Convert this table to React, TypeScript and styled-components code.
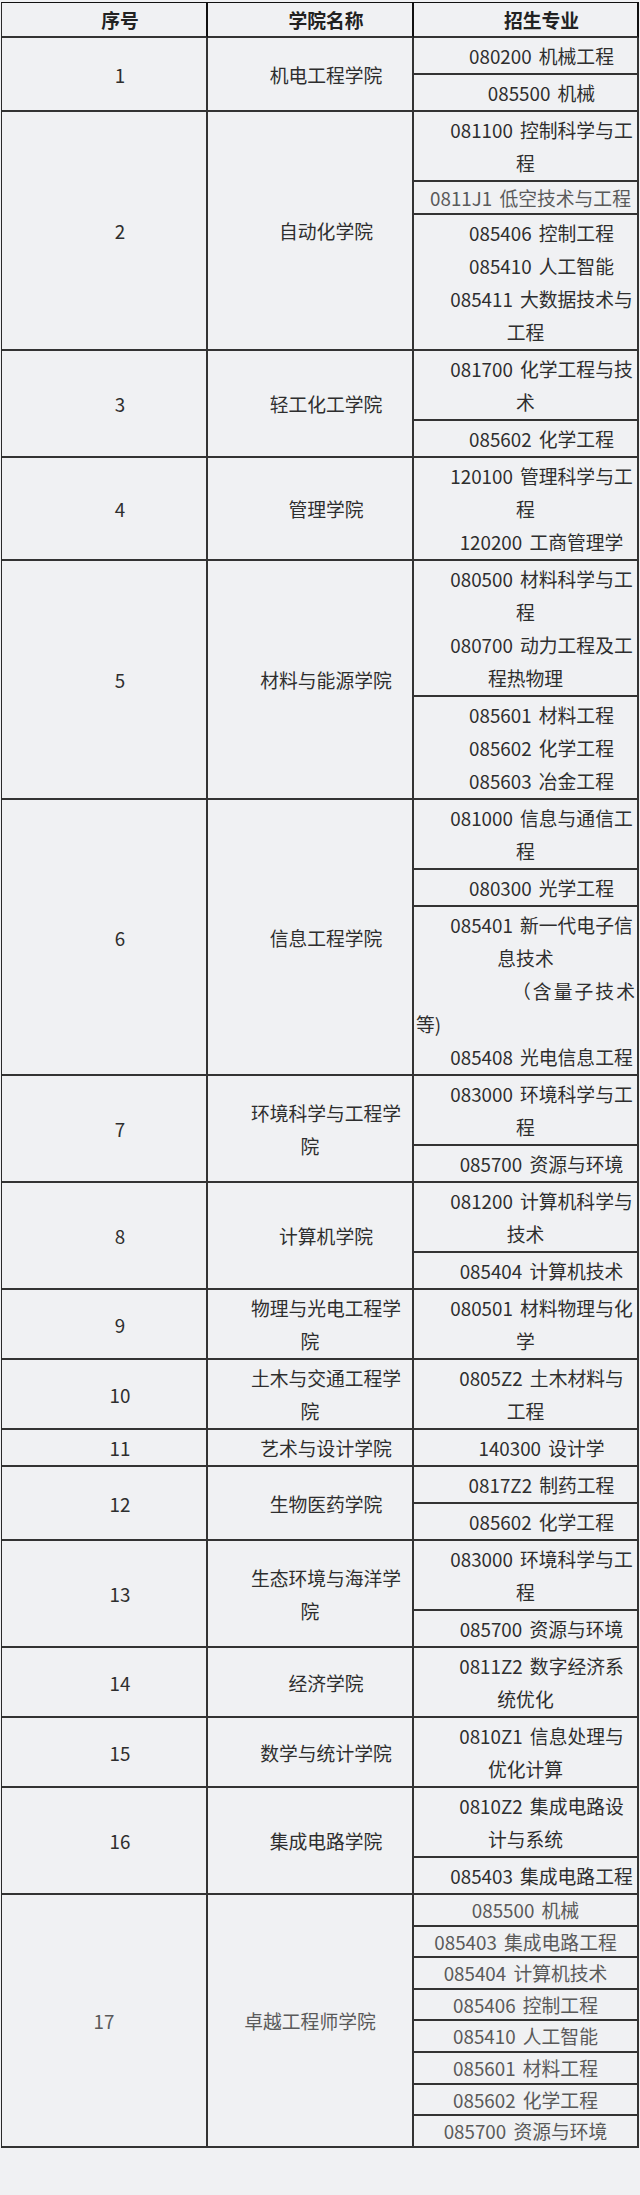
import React from 'react';
import styled, { createGlobalStyle } from 'styled-components';

const GlobalStyle = createGlobalStyle`
  html, body {
    margin: 0;
    padding: 0;
    background: #f0f1f3;
  }
  body {
    font-family: "Noto Sans CJK SC", "Noto Sans", sans-serif;
  }
`;

const Page = styled.div`
  padding: 2px 0 45px 1px;
`;

const Table = styled.table`
  width: 638px;
  table-layout: fixed;
  border-collapse: separate;
  border-spacing: 0;
  border-left: 1px solid #2a2a2a;
  border-top: 1px solid #111;
  font-size: 18.8px;
  word-spacing: 3px;
  color: #2e2e2e;
`;

const HeadCell = styled.th<{ $w: number }>`
  width: ${(p) => p.$w}px;
  box-sizing: border-box;
  padding: 0 2px;
  border-right: 2px solid #111;
  border-bottom: 2px solid #333;
  line-height: 33px;
  font-weight: 700;
  color: #222;
  text-align: center;
  text-indent: 32px;
`;

const Cell = styled.td<{ $added?: boolean; $lh?: number; $indent?: number }>`
  padding: 1px 2px;
  border-right: 2px solid #333;
  border-bottom: 2px solid #333;
  text-align: center;
  vertical-align: middle;
  line-height: ${(p) => p.$lh ?? 33}px;
  color: ${(p) => (p.$added ? '#5a5a5a' : '#2e2e2e')};
  text-indent: ${(p) => p.$indent ?? 0}px;
  white-space: pre-line;
`;

const Para = styled.p<{ $indent: number }>`
  margin: 0;
  text-indent: ${(p) => p.$indent}px;
`;

// the "(含量子技术等)" remark is a justified line, pushed right by its indent
const Note = styled.p`
  margin: 0;
  text-align: justify;
  text-indent: 96px;
`;

type Line = string | { note: string };

interface Block {
  paras: Line[];
  added?: boolean;
  indent?: number;
  lh?: number;
}

interface College {
  no: number;
  name: string;
  added?: boolean;
  blocks: Block[];
}

const b = (...paras: Line[]): Block => ({ paras });
const extra = (s: string, indent = 0, lh = 27.6): Block => ({
  paras: [s],
  added: true,
  indent,
  lh,
});

const colleges: College[] = [
  { no: 1, name: '机电工程学院', blocks: [b('080200 机械工程'), b('085500 机械')] },
  {
    no: 2,
    name: '自动化学院',
    blocks: [
      b('081100 控制科学与工\n程'),
      extra('0811J1 低空技术与工程', 10, 29),
      b('085406 控制工程', '085410 人工智能', '085411 大数据技术与\n工程'),
    ],
  },
  { no: 3, name: '轻工化工学院', blocks: [b('081700 化学工程与技\n术'), b('085602 化学工程')] },
  { no: 4, name: '管理学院', blocks: [b('120100 管理科学与工\n程', '120200 工商管理学')] },
  {
    no: 5,
    name: '材料与能源学院',
    blocks: [
      b('080500 材料科学与工\n程', '080700 动力工程及工\n程热物理'),
      b('085601 材料工程', '085602 化学工程', '085603 冶金工程'),
    ],
  },
  {
    no: 6,
    name: '信息工程学院',
    blocks: [
      b('081000 信息与通信工\n程'),
      b('080300 光学工程'),
      b('085401 新一代电子信\n息技术', { note: '（含量子技术等)' }, '085408 光电信息工程'),
    ],
  },
  { no: 7, name: '环境科学与工程学\n院', blocks: [b('083000 环境科学与工\n程'), b('085700 资源与环境')] },
  { no: 8, name: '计算机学院', blocks: [b('081200 计算机科学与\n技术'), b('085404 计算机技术')] },
  { no: 9, name: '物理与光电工程学\n院', blocks: [b('080501 材料物理与化\n学')] },
  { no: 10, name: '土木与交通工程学\n院', blocks: [b('0805Z2 土木材料与\n工程')] },
  { no: 11, name: '艺术与设计学院', blocks: [b('140300 设计学')] },
  { no: 12, name: '生物医药学院', blocks: [b('0817Z2 制药工程'), b('085602 化学工程')] },
  { no: 13, name: '生态环境与海洋学\n院', blocks: [b('083000 环境科学与工\n程'), b('085700 资源与环境')] },
  { no: 14, name: '经济学院', blocks: [b('0811Z2 数字经济系\n统优化')] },
  { no: 15, name: '数学与统计学院', blocks: [b('0810Z1 信息处理与\n优化计算')] },
  { no: 16, name: '集成电路学院', blocks: [b('0810Z2 集成电路设\n计与系统'), b('085403 集成电路工程')] },
  {
    no: 17,
    name: '卓越工程师学院',
    added: true,
    blocks: [
      extra('085500 机械'),
      extra('085403 集成电路工程'),
      extra('085404 计算机技术'),
      extra('085406 控制工程'),
      extra('085410 人工智能'),
      extra('085601 材料工程'),
      extra('085602 化学工程'),
      extra('085700 资源与环境'),
    ],
  },
];

const BlockCell: React.FC<{ block: Block }> = ({ block }) => (
  <Cell $added={block.added} $lh={block.lh}>
    {block.paras.map((p, i) =>
      typeof p === 'string' ? (
        <Para key={i} $indent={block.indent ?? 32}>
          {p}
        </Para>
      ) : (
        <Note key={i}>{p.note}</Note>
      )
    )}
  </Cell>
);

const App: React.FC = () => {
  return (
    <Page>
      <GlobalStyle />
      <Table>
        <thead>
          <tr>
            <HeadCell $w={206}>序号</HeadCell>
            <HeadCell $w={206}>学院名称</HeadCell>
            <HeadCell $w={225}>招生专业</HeadCell>
          </tr>
        </thead>
        <tbody>
          {colleges.map((c) =>
            c.blocks.map((block, i) => (
              <tr key={`${c.no}-${i}`}>
                {i === 0 && (
                  <>
                    <Cell rowSpan={c.blocks.length} $added={c.added} $indent={c.added ? 0 : 32}>
                      {c.no}
                    </Cell>
                    <Cell rowSpan={c.blocks.length} $added={c.added} $indent={c.added ? 0 : 32}>
                      {c.name}
                    </Cell>
                  </>
                )}
                <BlockCell block={block} />
              </tr>
            ))
          )}
        </tbody>
      </Table>
    </Page>
  );
};

export default App;
